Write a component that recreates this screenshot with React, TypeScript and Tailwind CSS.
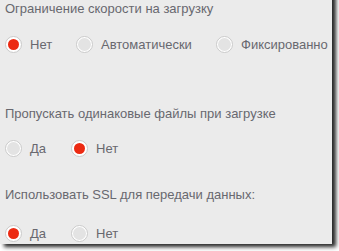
import { useState } from "react";

type Option = { label: string; value: string; width: string };

const Radio = ({ checked }: { checked: boolean }) => (
  <span className="flex items-center justify-center w-[17px] h-[17px] rounded-full border border-[#cacaca] bg-white shrink-0">
    {checked ? (
      <span className="w-[11px] h-[11px] rounded-full bg-[#ec2a12]" />
    ) : (
      <span className="w-[13px] h-[13px] rounded-full bg-[#e3e3e3]" />
    )}
  </span>
);

const RadioGroup = ({
  options,
  value,
  onChange,
}: {
  options: Option[];
  value: string;
  onChange: (v: string) => void;
}) => (
  <div className="flex items-center h-[17px]">
    {options.map((opt) => (
      <label
        key={opt.value}
        onClick={() => onChange(opt.value)}
        className={`flex items-center gap-[8px] cursor-pointer ${opt.width}`}
      >
        <Radio checked={value === opt.value} />
        <span className="leading-[17px]">{opt.label}</span>
      </label>
    ))}
  </div>
);

const App = () => {
  const [speed, setSpeed] = useState("none");
  const [skip, setSkip] = useState("no");
  const [ssl, setSsl] = useState("yes");

  return (
    <div
      className="w-[339px] h-[251px] bg-white overflow-hidden text-[13px] text-[#68686f]"
      style={{ fontFamily: '"Liberation Sans", Arial, sans-serif' }}
    >
      <div className="w-[332px] h-[264px] -mt-5 pt-5 bg-[#ebebeb] shadow-[4px_3px_4px_rgba(0,0,0,0.85)] pl-[5px]">
        <p className="leading-[16px] pt-[1px]">Ограничение скорости на загрузку</p>
        <div className="mt-[19px]">
          <RadioGroup
            value={speed}
            onChange={setSpeed}
            options={[
              { label: "Нет", value: "none", width: "w-[71px]" },
              { label: "Автоматически", value: "auto", width: "w-[140px]" },
              { label: "Фиксированно", value: "fixed", width: "" },
            ]}
          />
        </div>

        <p className="leading-[16px] mt-[53px]">Пропускать одинаковые файлы при загрузке</p>
        <div className="mt-[18px]">
          <RadioGroup
            value={skip}
            onChange={setSkip}
            options={[
              { label: "Да", value: "yes", width: "w-[66px]" },
              { label: "Нет", value: "no", width: "" },
            ]}
          />
        </div>

        <p className="leading-[16px] mt-[30px]">Использовать SSL для передачи данных:</p>
        <div className="mt-[22px]">
          <RadioGroup
            value={ssl}
            onChange={setSsl}
            options={[
              { label: "Да", value: "yes", width: "w-[66px]" },
              { label: "Нет", value: "no", width: "" },
            ]}
          />
        </div>
      </div>
    </div>
  );
};

export default App;
